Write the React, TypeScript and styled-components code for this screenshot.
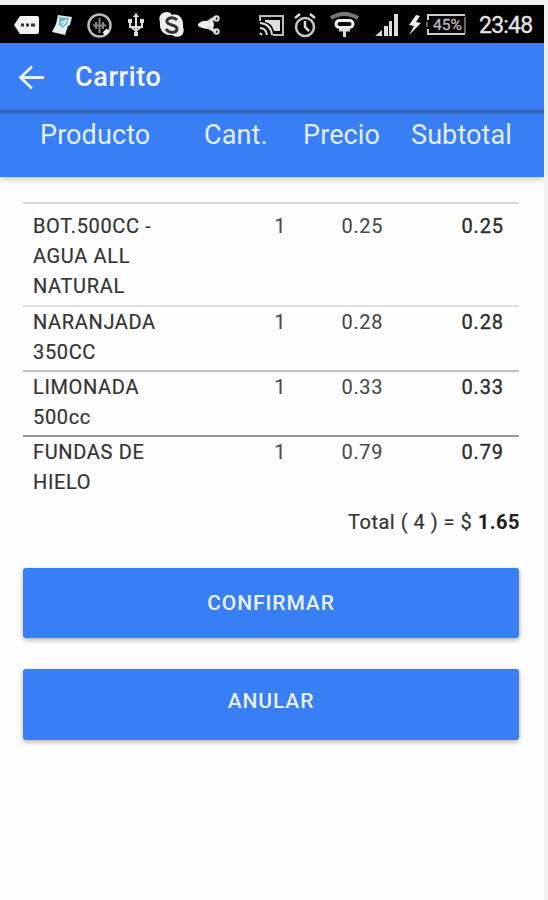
import React from "react";
import styled, { createGlobalStyle } from "styled-components";

const GlobalStyle = createGlobalStyle`
  * { box-sizing: border-box; }
  body { margin: 0; background: #f0f0f0; font-family: Roboto, "Noto Sans", sans-serif; }
`;

const Screen = styled.main`
  width: 544px;
  height: 900px;
  padding-top: 5px;
  background: linear-gradient(#f0f0f0 5px, #fefefe 5px);
  overflow: hidden;
`;

const StatusBar = styled.div`
  height: 38px;
  padding-left: 14px;
  display: flex;
  align-items: center;
  background: #000;
`;

const StatusIcon = styled.svg<{ $gap: number }>`
  flex: none;
  display: block;
  margin: 2px ${(p) => p.$gap}px 0 0;
  fill: none;
  stroke: #dcdcdc;
  stroke-width: 2;
`;

const Clock = styled.time`
  color: #e4e4e4;
  font-size: 23px;
  line-height: 38px;
  letter-spacing: -0.8px;
  white-space: nowrap;
  padding-top: 4px;
  -webkit-text-stroke: 0.3px #e4e4e4;
`;

const Toolbar = styled.header`
  height: 67px;
  padding: 1px 0 0 18px;
  display: flex;
  align-items: center;
  background: #387ef5;
`;

const Title = styled.h1`
  margin: 0 0 0 30px;
  color: #f4f7ff;
  font-size: 27px;
  line-height: 32px;
  font-weight: 500;
  letter-spacing: 0.6px;
`;

const ColumnBar = styled.div`
  height: 67px;
  padding: 9px 0 0 40px;
  display: grid;
  grid-template-columns: 164px 99px 108px 1fr;
  background: linear-gradient(#3a67b4, #365f9f 2px, #387ef5 4px);
  box-shadow: 0 2px 6px rgba(60, 40, 20, 0.28);
`;

const ColumnName = styled.span`
  color: #e4edff;
  font-size: 27px;
  line-height: 32px;
  letter-spacing: 0.1px;
`;

const Content = styled.section`
  padding: 25px 25px 0 23px;
`;

const Row = styled.div<{ $line: string; $first?: boolean }>`
  height: ${(p) => (p.$first ? 103 : 65)}px;
  padding: ${(p) => (p.$first ? "7px" : "0")} 15px 0 10px;
  display: grid;
  grid-template-columns: 140px 113px 97px 1fr;
  border-top: 2px solid ${(p) => p.$line};
  font-size: 20px;
  line-height: 30px;
`;

const Name = styled.span`
  white-space: pre-line;
  color: #333;
  letter-spacing: 0.65px;
  -webkit-text-stroke: 0.2px #333;
`;

const Value = styled.span<{ $strong?: boolean }>`
  text-align: right;
  letter-spacing: ${(p) => (p.$strong ? 0.9 : 0.6)}px;
  color: ${(p) => (p.$strong ? "#2c2c2c" : "#484848")};
  -webkit-text-stroke: ${(p) => (p.$strong ? "0.35px #2c2c2c" : "0.1px #484848")};
`;

const Total = styled.p`
  margin: 7px -1px 0 0;
  text-align: right;
  color: #333;
  font-size: 20px;
  line-height: 30px;
  letter-spacing: 0.5px;
  white-space: pre;
  -webkit-text-stroke: 0.2px #333;

  b { font-weight: 700; color: #202020; -webkit-text-stroke: 0; }
`;

const Actions = styled.div`
  margin-top: 31px;
  display: grid;
  gap: 31px;
`;

const ActionButton = styled.button<{ $height: number; $lift?: number }>`
  width: 496px;
  height: ${(p) => p.$height}px;
  border: 0;
  border-radius: 3px;
  padding: 0 0 ${(p) => p.$lift ?? 0}px;
  background: #387ef5;
  color: #eaf1ff;
  box-shadow: 0 2px 5px rgba(50, 40, 20, 0.36);
  font: 500 21px/30px Roboto, "Noto Sans", sans-serif;
  letter-spacing: 0.9px;
`;

const items = [
  { name: "BOT.500CC -\nAGUA ALL\nNATURAL", qty: 1, price: "0.25", line: "#d5d8d8" },
  { name: "NARANJADA\n350CC", qty: 1, price: "0.28", line: "#dedede" },
  { name: "LIMONADA\n500cc", qty: 1, price: "0.33", line: "#c0c0c0" },
  { name: "FUNDAS DE\nHIELO", qty: 1, price: "0.79", line: "#999999" },
];

function StatusIcons() {
  return (
    <>
      <StatusIcon $gap={13} width="25" height="20" viewBox="0 0 25 20">
        <path d="M0 10 6 1H23Q25 1 25 3V17Q25 19 23 19H6Z" fill="#f2f2f2" stroke="none" />
        <path d="M7 10h3m2 0h3m2 0h4" stroke="#333" strokeWidth="3" />
      </StatusIcon>
      <StatusIcon $gap={14} width="21" height="22" viewBox="0 0 21 22">
        <path d="M6 1 20 3 18 11 16 12 13 21 0 18 4 10Z" fill="#e1eeee" stroke="none" />
        <path d="M7 3 17 4 15 10 11 14 7 11Z" fill="#6fb8c8" stroke="none" />
        <path d="m9 9 6-3m-5 6 4-4" stroke="#d5f0f4" strokeWidth="1.5" />
      </StatusIcon>
      <StatusIcon $gap={16} width="25" height="25" viewBox="0 0 25 25">
        <circle cx="12.500" cy="12.500" r="11" stroke="#bbb" strokeWidth="2.500" />
        <path d="M12.500 5v15M6 12.500h13M9 9v7m7-7v7" stroke="#858585" />
        <path d="m17 21 4-4" stroke="#eee" strokeWidth="4" />
      </StatusIcon>
      <StatusIcon $gap={15} width="16" height="24" viewBox="0 0 16 24">
        <path d="M8 1v22M2 7v7h12V7M8 18l-5-4m5 4 5-4" />
        <path d="m5 4 3-4 3 4ZM0 6h4v4H0zM12 6h4v4h-4zM6 19h4v4H6z" fill="#ddd" stroke="none" />
      </StatusIcon>
      <StatusIcon $gap={14} width="25" height="26" viewBox="0 0 25 26">
        <path d="M8 0C2 0-1 5 1 10c-1 8 4 14 12 13 7 5 14-1 11-8C25 7 20 1 13 3 12 1 10 0 8 0Z" fill="#eee" stroke="none" />
        <path d="M18 8C14 4 7 6 8 10c1 4 10 2 10 7 0 4-8 5-11 0" stroke="#333" strokeWidth="3" />
      </StatusIcon>
      <StatusIcon $gap={39} width="22" height="20" viewBox="0 0 22 20">
        <path d="M0 9Q4 5 9 6L14 3 16 9 15 15 9 14Q5 14 0 11Z" fill="#ededed" stroke="none" />
        <path d="m10 7 8-5m-8 10 8 5" strokeWidth="3" />
        <circle cx="18.500" cy="3.500" r="2.200" />
        <circle cx="18.500" cy="16.500" r="2.200" />
      </StatusIcon>
      <StatusIcon $gap={10} width="25" height="21" viewBox="0 0 25 21">
        <path d="M1 6V1h23v19H14" stroke="#bcbcbc" />
        <path d="M6 5h15v11h-6Q13 8 6 7Z" fill="#ddd" stroke="none" />
        <path d="M1 8q11 1 12 12M1 13q6 0 7 7M1 18l2 2" />
      </StatusIcon>
      <StatusIcon $gap={14} width="22" height="25" viewBox="0 0 22 25">
        <circle cx="11" cy="14" r="9" stroke="#c7c7c7" strokeWidth="2.500" />
        <path d="M1 5 6 1m15 4-5-4M11 8v6l4 4" strokeWidth="2.500" />
      </StatusIcon>
      <StatusIcon $gap={16} width="29" height="26" viewBox="0 0 29 26">
        <path d="M1 6q13-8 27 0" stroke="#777" strokeWidth="4" />
        <rect x="6" y="8.500" width="17" height="7" rx="3.500" stroke="#eee" strokeWidth="3" />
        <path d="M9 18h11M14.500 16v9" stroke="#ddd" strokeWidth="3" />
      </StatusIcon>
      <StatusIcon $gap={10} width="23" height="24" viewBox="0 0 23 24">
        <path d="M0 23 7 17V23ZM9 13h4v10H9zM14 8h3v15h-3zM19 1h4v22h-4z" fill="#ddd" stroke="none" />
      </StatusIcon>
      <StatusIcon $gap={4} width="14" height="22" viewBox="0 0 14 22">
        <path d="M8 1 1 11l5 1-5 9L13 9 8 8l4-6Z" fill="#eee" stroke="none" />
      </StatusIcon>
      <StatusIcon $gap={12} width="41" height="24" viewBox="0 0 41 24">
        <path d="M39 2H2v5M2 16v5h37" stroke="#ccc" />
        <path d="M39 4v16M1 9v5" stroke="#666" />
        <text x="7" y="16.500" textLength="29" lengthAdjust="spacingAndGlyphs" fill="#bbb" stroke="#bbb" strokeWidth=".3" fontSize="14">45%</text>
      </StatusIcon>
    </>
  );
}

export default function App() {
  return (
    <>
      <GlobalStyle />
      <Screen>
        <StatusBar>
          <StatusIcons />
          <Clock>23:48</Clock>
        </StatusBar>
        <Toolbar>
          <svg width="27" height="25" viewBox="0 0 27 25" fill="none" stroke="#e8f0ff" strokeWidth="2.800">
            <path d="M26 12.500H2M14 1.500 2.500 12.500 14 23.500" />
          </svg>
          <Title>Carrito</Title>
        </Toolbar>
        <ColumnBar>
          <ColumnName>Producto</ColumnName>
          <ColumnName>Cant.</ColumnName>
          <ColumnName>Precio</ColumnName>
          <ColumnName>Subtotal</ColumnName>
        </ColumnBar>
        <Content>
          {items.map((item, i) => (
            <Row key={item.name} $line={item.line} $first={i === 0}>
              <Name>{item.name}</Name>
              <Value>{item.qty}</Value>
              <Value>{item.price}</Value>
              <Value $strong>{item.price}</Value>
            </Row>
          ))}
          <Total>Total ( 4 ) = $ <b>1.65</b></Total>
          <Actions>
            <ActionButton $height={70}>CONFIRMAR</ActionButton>
            <ActionButton $height={71} $lift={8}>ANULAR</ActionButton>
          </Actions>
        </Content>
      </Screen>
    </>
  );
}
